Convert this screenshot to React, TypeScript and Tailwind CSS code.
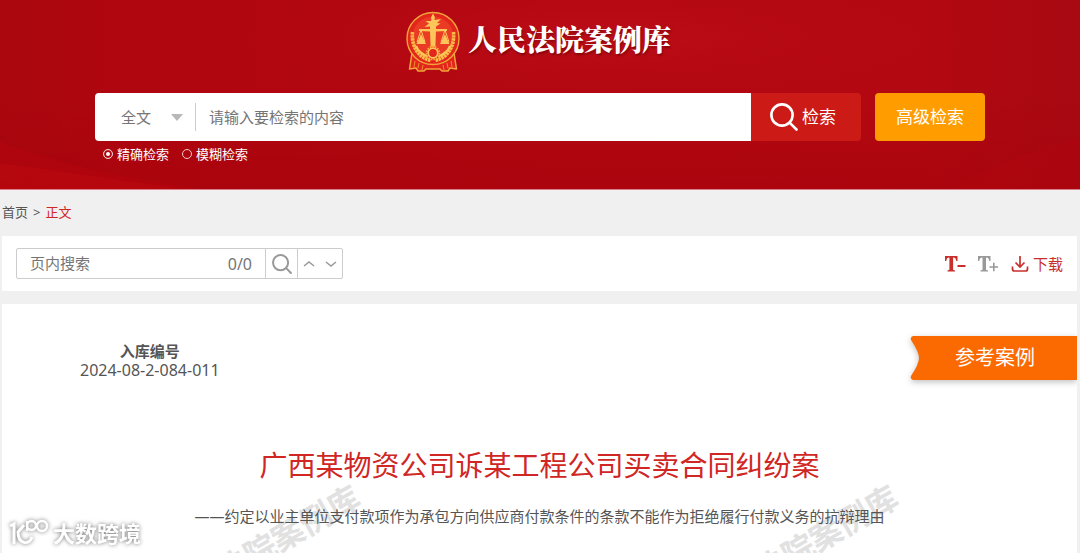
import React, { useState } from 'react';

const Emblem: React.FC = () => (
  <svg viewBox="0 0 54 62" className="h-[62px] w-[54px] shrink-0" aria-hidden="true">
    {/* ribbon */}
    <path
      d="M6 42 L3.5 58 L10 57 L12 60 L18 60 L20 58 L34 58 L36 60 L42 60 L44 57 L50.5 58 L48 42 Z"
      fill="#e3261b"
      stroke="#f0a53a"
      strokeWidth="1.5"
      strokeLinejoin="round"
    />
    <path d="M9 50 L8 56 M13 52 L12 57 M17 54 L16 59 M37 54 L38 59 M41 52 L42 57 M45 50 L46 56" stroke="#f0a53a" strokeWidth="0.8" />
    <circle cx="27" cy="27.5" r="26" fill="#e3261b" stroke="#f0a53a" strokeWidth="1.4" />
    <circle cx="27" cy="26" r="20.5" fill="#ea3c25" />
    {/* wheat */}
    <path d="M6.5 21 C5 36 13 47 25 49.5" fill="none" stroke="#f9bd48" strokeWidth="3.6" strokeDasharray="2.6 0.5" />
    <path d="M47.5 21 C49 36 41 47 29 49.5" fill="none" stroke="#f9bd48" strokeWidth="3.6" strokeDasharray="2.6 0.5" />
    <path d="M10 35 C12 40 16 43.5 22 45.5 M44 35 C42 40 38 43.5 32 45.5" fill="none" stroke="#fbc857" strokeWidth="2.2" />
    {/* pillar */}
    <path
      d="M27 2.5 L28.8 6 L28.5 9 L35 8 L31 12 L34.5 12.5 L30 15.5 L30 18 L41 18 L41 20 L30 20.5 L29.3 37 L24.7 37 L24 20.5 L13 20 L13 18 L24 18 L24 15.5 L18.5 16 L23 12.5 L19.5 10 L25.2 10 L25.2 6 Z"
      fill="#fdc55a"
    />
    {/* scales */}
    <path d="M15 19 L11 31 M15 19 L19 31 M39 19 L35 31 M39 19 L43 31" stroke="#fdc55a" strokeWidth="1" />
    <path d="M15 23 L20 33 H10.5 Z M39 23 L43.5 33 H34 Z" fill="#fdc55a" />
    {/* gear */}
    <circle cx="27" cy="42" r="6.4" fill="#e3261b" stroke="#f9a938" strokeWidth="1.8" strokeDasharray="1.6 1" />
    <circle cx="27" cy="42" r="4.8" fill="#e3261b" stroke="#fdc55a" strokeWidth="1.8" />
    <circle cx="27" cy="42" r="1.8" fill="#e3261b" />
  </svg>
);

const SearchIcon: React.FC<{ className: string; stroke: number }> = ({ className, stroke }) => (
  <svg viewBox="0 0 28 28" className={className} fill="none" stroke="currentColor" strokeWidth={stroke} strokeLinecap="round" aria-hidden="true">
    <circle cx="12" cy="12" r="10.6" />
    <path d="M19.8 19.8 L26.5 26.5" />
  </svg>
);

const HeaderBackdrop: React.FC = () => (
  <svg viewBox="0 0 1080 190" preserveAspectRatio="none" className="absolute inset-0 h-full w-full" aria-hidden="true">
    <defs>
      <linearGradient id="base" x1="0" y1="0" x2="1" y2="0">
        <stop offset="0" stopColor="#aa070f" />
        <stop offset="0.12" stopColor="#b0060f" />
        <stop offset="0.5" stopColor="#b30711" />
        <stop offset="0.85" stopColor="#b30811" />
        <stop offset="1" stopColor="#a80912" />
      </linearGradient>
      <radialGradient id="glow" cx="0.56" cy="0.2" r="0.35">
        <stop offset="0" stopColor="#c2121c" stopOpacity="0.6" />
        <stop offset="1" stopColor="#b30711" stopOpacity="0" />
      </radialGradient>
      <linearGradient id="fade" x1="0" y1="0" x2="0" y2="1">
        <stop offset="0.5" stopColor="#a0000a" stopOpacity="0" />
        <stop offset="1" stopColor="#a0000a" stopOpacity="0.4" />
      </linearGradient>
    </defs>
    <rect width="1080" height="190" fill="url(#base)" />
    <rect width="1080" height="190" fill="url(#glow)" />
    <rect width="1080" height="190" fill="url(#fade)" />
    <path d="M0 142 C60 165 120 178 200 190 H0 Z" fill="#b8060f" opacity="0.4" />
    <path d="M0 164 C60 172 130 182 180 190 H0 Z" fill="#c00a12" opacity="0.4" />
    <path d="M950 190 C1000 160 1040 150 1080 138 V190 Z" fill="#b5060f" opacity="0.3" />
  </svg>
);

const modes = [
  { value: 'exact', label: '精确检索' },
  { value: 'fuzzy', label: '模糊检索' },
];

const Header: React.FC = () => {
  const [mode, setMode] = useState('exact');

  return (
    <header className="relative border-b border-[#d9808a] bg-[#b00610]">
      <HeaderBackdrop />
      <div className="relative px-4 pt-[11px] pb-[25px]">
        <div className="flex items-center justify-center gap-2 pr-[3px]">
          <Emblem />
          <h1 className="pb-[6px] font-['Noto_Serif_CJK_SC','Noto_Sans_CJK_SC',serif] text-[29px] leading-9 font-black text-white [text-shadow:1px_2px_2px_rgba(90,0,0,0.5)]">
            人民法院案例库
          </h1>
        </div>
        <form className="mx-auto mt-5 max-w-[890px]" onSubmit={(e) => e.preventDefault()}>
          <div className="flex h-12">
            <div className="flex min-w-0 flex-1 items-center rounded-l-sm bg-white text-[15px] text-[#757575]">
              <div className="relative flex w-[101px] shrink-0 items-center border-r border-[#ccc]">
                <select aria-label="检索范围" className="h-7 w-full appearance-none bg-transparent pl-[26px] outline-none">
                  <option>全文</option>
                </select>
                <svg viewBox="0 0 12 7" className="pointer-events-none absolute right-3 h-[7px] w-3" aria-hidden="true">
                  <path d="M0 0 H12 L6 7 Z" fill="#b8b8b8" />
                </svg>
              </div>
              <input
                type="text"
                aria-label="检索内容"
                placeholder="请输入要检索的内容"
                className="h-full min-w-0 flex-1 px-[13px] outline-none placeholder:text-[#757575]"
              />
            </div>
            <button type="submit" className="flex w-[110px] items-center justify-center gap-1 rounded-r-sm bg-[#cc1b16] pr-[6px] text-[17px] text-white">
              <SearchIcon className="h-7 w-7" stroke={2.6} />
              检索
            </button>
            <button type="button" className="ml-[14px] w-[110px] rounded-sm bg-[#ff9c00] text-[17px] text-white">
              高级检索
            </button>
          </div>
          <div className="mt-[3px] flex gap-[13px] pl-2 text-[13px] leading-5 text-white">
            {modes.map((m) => (
              <label key={m.value} className="flex items-center gap-1">
                <input
                  type="radio"
                  name="mode"
                  checked={mode === m.value}
                  onChange={() => setMode(m.value)}
                  className="h-[10px] w-[10px] appearance-none rounded-full border border-[#f3c8ca] checked:bg-white checked:shadow-[inset_0_0_0_2px_#b00610]"
                />
                {m.label}
              </label>
            ))}
          </div>
        </form>
      </div>
    </header>
  );
};

const Toolbar: React.FC = () => (
  <section className="flex items-center justify-between bg-white px-[14px] py-3">
    <div className="flex h-[31px] w-[327px] rounded-xs border border-[#ccc] text-[#757575]">
      <input
        type="text"
        aria-label="页内搜索"
        placeholder="页内搜索"
        className="min-w-0 flex-1 pl-[13px] text-[15px] outline-none placeholder:text-[#757575]"
      />
      <span className="flex items-center px-[13px] text-base">0/0</span>
      <button type="button" aria-label="搜索" className="flex w-[33px] items-center justify-center border-x border-[#ccc] text-[#999]">
        <SearchIcon className="h-5 w-5" stroke={2.8} />
      </button>
      <div className="flex w-11 items-center justify-around text-[#999]">
        <button type="button" aria-label="上一个">
          <svg viewBox="0 0 12 6" className="h-[6px] w-3" fill="none" stroke="currentColor" strokeWidth="1.5">
            <path d="M1 5 L6 1 L11 5" />
          </svg>
        </button>
        <button type="button" aria-label="下一个">
          <svg viewBox="0 0 12 6" className="h-[6px] w-3" fill="none" stroke="currentColor" strokeWidth="1.5">
            <path d="M1 1 L6 5 L11 1" />
          </svg>
        </button>
      </div>
    </div>
    <div className="flex items-center gap-3 text-[#c9302c]">
      <button type="button" aria-label="缩小字体">
        <svg viewBox="0 0 21 18" className="h-[18px] w-[21px]" fill="currentColor">
          <path d="M0 1 H12.5 V6 H11.3 C10.8 3.5 10.3 2.4 8.1 2.4 V14.8 L10 15.4 V16.5 H2.5 V15.4 L4.4 14.8 V2.4 C2.3 2.4 1.7 3.5 1.2 6 H0 Z" />
          <path d="M12.5 10 H20.5 V12 H12.5 Z" />
        </svg>
      </button>
      <button type="button" aria-label="放大字体" className="text-[#999]">
        <svg viewBox="0 0 21 18" className="h-[18px] w-[21px]" fill="currentColor">
          <path d="M0 1 H12.5 V6 H11.3 C10.8 3.5 10.3 2.4 8 2.4 V14.8 L10 15.4 V16.5 H2.5 V15.4 L4.5 14.8 V2.4 C2.3 2.4 1.7 3.5 1.2 6 H0 Z" />
          <path d="M11.5 11.2 H15 V7.7 H16.6 V11.2 H20 V12.8 H16.6 V16.3 H15 V12.8 H11.5 Z" />
        </svg>
      </button>
      <button type="button" className="flex items-center gap-1 text-[15px] leading-5">
        <svg viewBox="0 0 18 18" className="h-[18px] w-[18px]" fill="none" stroke="currentColor" strokeWidth="1.7">
          <path d="M9 1 V11.5 M4.5 7.5 L9 12 L13.5 7.5" />
          <path d="M1.5 11.5 V14 Q1.5 16 3.5 16 H14.5 Q16.5 16 16.5 14 V11.5" />
        </svg>
        下载
      </button>
    </div>
  </section>
);

const watermark = 'pointer-events-none absolute top-[230px] -translate-x-1/2 -rotate-30 text-[32px] leading-8 font-bold whitespace-nowrap text-[#e1e1e1]';

const Article: React.FC = () => (
  <article className="relative mt-[13px] flex-1 overflow-hidden bg-white pb-6">
    <span className={`${watermark} left-[24%]`} aria-hidden="true">人民法院案例库</span>
    <span className={`${watermark} left-[74%]`} aria-hidden="true">人民法院案例库</span>
    <div className="relative">
      <div className="flex items-start justify-between pt-8">
        <dl className="ml-[78px] pt-[6px] text-center text-[#555]">
          <dt className="text-[15px] leading-[18px] font-bold">入库编号</dt>
          <dd className="text-base leading-5">2024-08-2-084-011</dd>
        </dl>
        <div className="relative h-11 w-[167px] text-xl leading-[44px] text-white">
          <svg viewBox="0 0 167 44" className="absolute inset-0 h-full w-full overflow-visible drop-shadow-[0_2px_3px_rgba(0,0,0,0.25)]" aria-hidden="true">
            <path d="M3 0 H167 V44 H3 Q0 43 1 40 Q9 28 9 22 Q9 16 1 4 Q0 1 3 0 Z" fill="#fb6a00" />
          </svg>
          <span className="relative block pl-[45px]">参考案例</span>
        </div>
      </div>
      <h2 className="mt-[65px] text-center text-[28px] leading-10 text-[#d02624]">
        广西某物资公司诉某工程公司买卖合同纠纷案
      </h2>
      <p className="mt-[19px] text-center text-[15px] leading-6 text-[#555]">
        ——约定以业主单位支付款项作为承包方向供应商付款条件的条款不能作为拒绝履行付款义务的抗辩理由
      </p>
    </div>
  </article>
);

const SiteMark: React.FC = () => (
  <div className="fixed bottom-[6px] left-[9px] flex items-center gap-1 drop-shadow-[0_0_2px_rgba(0,0,0,0.55)]">
    <svg viewBox="0 0 40 28" className="h-7 w-10" fill="none" stroke="#fff" strokeWidth="3" aria-hidden="true">
      <path d="M1 7 L5 5 V25" />
      <path d="M15 6 L9 13 C9 25 20 27 23 18" />
      <path d="M18 12 V2" strokeWidth="2" />
      <circle cx="22.5" cy="6.5" r="4.5" strokeWidth="2.5" />
      <circle cx="33" cy="7" r="5" strokeWidth="2.5" />
    </svg>
    <span className="text-[22px] leading-7 font-bold text-white">大数跨境</span>
  </div>
);

const App: React.FC = () => (
  <div className="flex min-h-screen flex-col bg-[#f0f0f0] font-['Noto_Sans','Noto_Sans_CJK_SC',sans-serif]">
    <Header />
    <main className="flex flex-1 flex-col pr-[3px] pl-[2px]">
      <nav aria-label="面包屑" className="flex h-[46px] items-center gap-[5px] text-[13px] text-[#555]">
        <a href="#home">首页</a>
        <span>&gt;</span>
        <a href="#text" className="text-[#d02624]">正文</a>
      </nav>
      <Toolbar />
      <Article />
    </main>
    <SiteMark />
  </div>
);

export default App;
